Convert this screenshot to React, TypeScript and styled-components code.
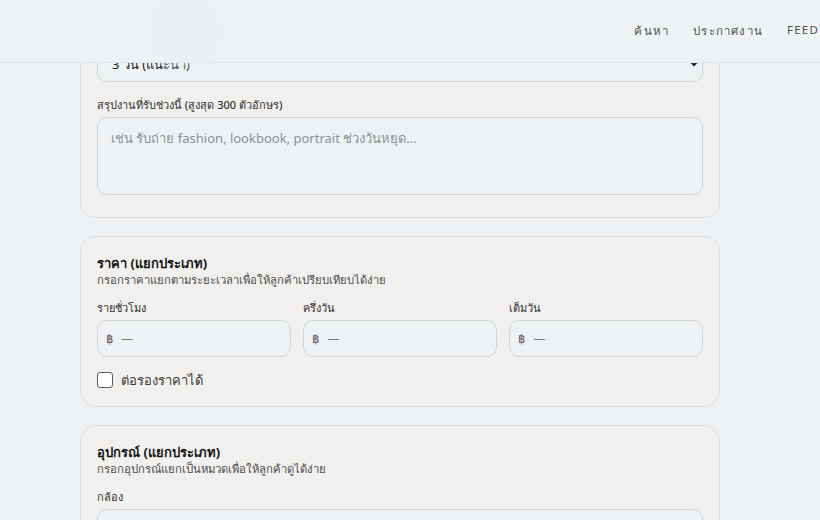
import React, { useLayoutEffect, useRef } from 'react';
import styled, { createGlobalStyle } from 'styled-components';

const GlobalStyle = createGlobalStyle`
  html, body {
    margin: 0;
    padding: 0;
    background: #eef1f4;
    font-family: "Noto Sans", "Open Sans", sans-serif;
    color: #2b2b2b;
  }
  * { box-sizing: border-box; }
`;

const Header = styled.header`
  position: fixed;
  top: 0;
  left: 0;
  right: 0;
  height: 63px;
  z-index: 10;
  display: flex;
  align-items: center;
  justify-content: space-between;
  padding-left: 150px;
  background: #eff2f5;
  border-bottom: 1px solid #e2e5e8;
`;

const LogoGhost = styled.div`
  width: 70px;
  height: 63px;
  border-radius: 40%;
  background: #ebeef2;
  filter: blur(6px);
`;

const Nav = styled.nav`
  display: flex;
  gap: 24px;
  margin-right: 1px;
`;

const NavLink = styled.a`
  font-size: 11.5px;
  letter-spacing: 1.2px;
  color: #4f4f4f;
  text-decoration: none;
  text-transform: uppercase;
`;

const Main = styled.main`
  width: 640px;
  margin: 0 0 0 80px;
  padding: 90px 0 60px;
  display: flex;
  flex-direction: column;
  gap: 18px;
`;

const Card = styled.section`
  background: #f1f0ee;
  border: 1px solid #e0ddd9;
  border-radius: 16px;
  padding: 17px 16px 16px;
  display: flex;
  flex-direction: column;
`;

const CardTitle = styled.h2`
  margin: 0;
  font-size: 13px;
  font-weight: 700;
  color: #161616;
  line-height: 18px;
`;

const CardHint = styled.p`
  margin: 0 0 11px;
  font-size: 11.3px;
  color: #4d4d4d;
  line-height: 16px;
`;

const Field = styled.label<{ $top?: number }>`
  display: flex;
  flex-direction: column;
  gap: 3px;
  min-width: 0;
  margin-top: ${(p) => p.$top ?? 0}px;
`;

const Label = styled.span`
  font-size: 11px;
  font-weight: 500;
  color: #333;
  line-height: 18px;
`;

const Select = styled.select`
  height: 37px;
  border: 1px solid #d7d4cf;
  border-radius: 10px;
  background: #eff2f5;
  padding: 0 10px;
  font-family: inherit;
  font-size: 13px;
  color: #222;
`;

const TextArea = styled.textarea`
  height: 78px;
  resize: none;
  border: 1px solid #d7d4cf;
  border-radius: 10px;
  background: #eff2f5;
  padding: 10px 13px;
  font-family: inherit;
  font-size: 13px;
  color: #333;
  margin-bottom: 6px;
  &::placeholder { color: #8c9096; }
`;

const PriceGrid = styled.div`
  display: grid;
  grid-template-columns: repeat(3, minmax(0, 1fr));
  gap: 12px;
`;

const PriceBox = styled.div`
  height: 37px;
  display: flex;
  align-items: center;
  gap: 6px;
  padding: 0 8px;
  border: 1px solid #d7d4cf;
  border-radius: 10px;
  background: #eff2f5;
`;

const Baht = styled.span`
  font-family: "DejaVu Sans Mono", monospace;
  font-size: 12px;
  color: #6a5566;
`;

const PriceInput = styled.input`
  flex: 1;
  width: 100%;
  min-width: 0;
  border: none;
  background: transparent;
  font-family: inherit;
  font-size: 12px;
  color: #333;
  outline: none;
  &::placeholder { color: #7b7b7b; }
`;

const CheckRow = styled.label`
  display: flex;
  align-items: center;
  gap: 8px;
  margin-top: 13px;
  font-size: 13px;
  line-height: 20px;
  color: #3a3a3a;
`;

const Box = styled.input`
  width: 16px;
  height: 16px;
  margin: 0;
  appearance: none;
  border: 1.5px solid #5d5d66;
  border-radius: 3px;
  background: #fff;
`;

const Wide = styled.div`
  height: 37px;
  border: 1px solid #d7d4cf;
  border-radius: 10px;
  background: #eff2f5;
`;

export default function App() {
  const priceRef = useRef<HTMLElement>(null);

  useLayoutEffect(() => {
    if (priceRef.current) {
      const top = priceRef.current.getBoundingClientRect().top + window.scrollY;
      window.scrollTo(0, top - 236);
    }
  }, []);

  return (
    <>
      <GlobalStyle />
      <Header>
        <LogoGhost />
        <Nav>
          <NavLink href="#">ค้นหา</NavLink>
          <NavLink href="#">ประกาศงาน</NavLink>
          <NavLink href="#">Feed</NavLink>
        </Nav>
      </Header>
      <Main>
        <Card>
          <Select defaultValue="3" aria-label="ระยะเวลา">
            <option value="3">3 วัน (แนะนำ)</option>
            <option value="7">7 วัน</option>
          </Select>
          <Field $top={14}>
            <Label>สรุปงานที่รับช่วงนี้ (สูงสุด 300 ตัวอักษร)</Label>
            <TextArea placeholder="เช่น รับถ่าย fashion, lookbook, portrait ช่วงวันหยุด..." />
          </Field>
        </Card>

        <Card ref={priceRef}>
          <CardTitle>ราคา (แยกประเภท)</CardTitle>
          <CardHint>กรอกราคาแยกตามระยะเวลาเพื่อให้ลูกค้าเปรียบเทียบได้ง่าย</CardHint>
          <PriceGrid>
            {['รายชั่วโมง', 'ครึ่งวัน', 'เต็มวัน'].map((name) => (
              <Field key={name}>
                <Label>{name}</Label>
                <PriceBox>
                  <Baht>฿</Baht>
                  <PriceInput placeholder="—" />
                </PriceBox>
              </Field>
            ))}
          </PriceGrid>
          <CheckRow>
            <Box type="checkbox" />
            ต่อรองราคาได้
          </CheckRow>
        </Card>

        <Card>
          <CardTitle>อุปกรณ์ (แยกประเภท)</CardTitle>
          <CardHint>กรอกอุปกรณ์แยกเป็นหมวดเพื่อให้ลูกค้าดูได้ง่าย</CardHint>
          <Field>
            <Label>กล้อง</Label>
            <Wide />
          </Field>
        </Card>
      </Main>
    </>
  );
}
